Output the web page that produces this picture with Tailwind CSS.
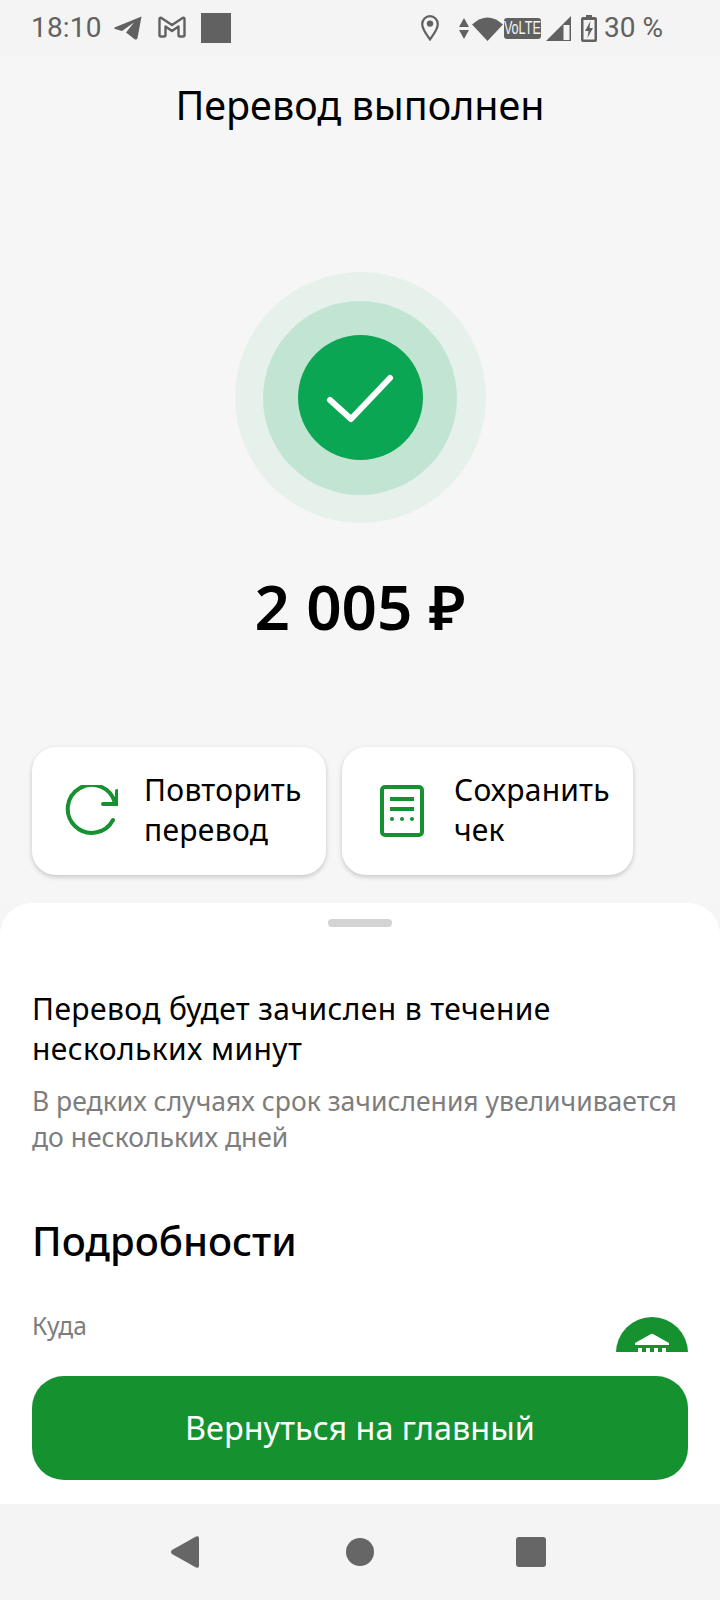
<!DOCTYPE html>
<html lang="ru">
<head>
    <meta charset="UTF-8">
    <meta name="viewport" content="width=device-width, initial-scale=1.0">
    <script src="https://cdn.jsdelivr.net/npm/@tailwindcss/browser@4"></script>
    <title>Перевод выполнен</title>
</head>
<body class="bg-[#f5f5f5]">
<div class="w-[720px] h-[1600px] flex flex-col overflow-hidden font-['Noto_Sans','Open_Sans',sans-serif] text-black">

    <!-- status bar -->
    <div class="h-[56px] shrink-0 flex items-center bg-[#f4f4f4] pl-[31px] text-[#616161] font-['Roboto',sans-serif] text-[28px]">
        <span class="w-[83px] tracking-[0.2px]">18:10</span>
        <svg class="w-[28px] h-[24px] mt-[-1px]" viewBox="0 0 28 24" fill="#616161"><path d="M27.5 0.5 L0.5 11.5 Q0 12.5 1 13 L8 15 L20 6.5 L12 16.5 L21 23.5 Q23 24 23.5 22 Z"/></svg>
        <svg class="w-[28px] h-[22px] ml-[16px] mt-[-3px]" viewBox="0 0 28 22" fill="none" stroke="#616161" stroke-width="2.4" stroke-linejoin="round"><path d="M1.5 3 Q1.5 1.5 3 1.8 L14 9 L25 1.8 Q26.5 1.5 26.5 3 V19 Q26.5 20.5 25 20.5 H22 Q20.5 20.5 20.5 19 V10.5 L14 15 L7.5 10.5 V19 Q7.5 20.5 6 20.5 H3 Q1.5 20.5 1.5 19 Z"/></svg>
        <div class="w-[30px] h-[30px] bg-[#616161] ml-[15px]"></div>

        <svg class="w-[18px] h-[26px] ml-[190px]" viewBox="0 0 18 26" fill="none" stroke="#616161" stroke-width="2.2"><path d="M9 24.5 C6 20 1.2 14.5 1.2 9 A7.8 7.8 0 0 1 16.8 9 C16.8 14.5 12 20 9 24.5 Z"/><circle cx="9" cy="8.6" r="3.2" fill="#616161" stroke="none"/></svg>
        <svg class="w-[10px] h-[21px] ml-[20px]" viewBox="0 0 10 21" fill="#616161"><path d="M5 0 L10 9 H0 Z M0 12 H10 L5 21 Z"/></svg>
        <svg class="w-[31px] h-[25px] ml-[3px]" viewBox="0 0 31 25" fill="#616161"><path d="M0 8.5 Q15.5 -5.500 31 8.500 L15.500 25 Z"/></svg>
        <div class="w-[37px] h-[21px] ml-[1px] rounded-[3px] bg-[#616161] text-[#f4f4f4] text-[18px] leading-[21px] flex justify-center font-['Liberation_Sans',sans-serif] overflow-hidden"><span class="inline-block scale-x-[0.7] origin-center">VoLTE</span></div>
        <svg class="w-[25px] h-[25px] ml-[5px]" viewBox="0 0 25 25"><path d="M0 25 L25 0 V25 Z" fill="#616161"/><rect x="17.500" y="9" width="6" height="15" fill="#f4f4f4"/></svg>
        <svg class="w-[16px] h-[27px] ml-[10px]" viewBox="0 0 16 27"><path d="M5 0 H11 V2 H14 Q16 2 16 4 V25 Q16 27 14 27 H2 Q0 27 0 25 V4 Q0 2 2 2 H5 Z" fill="#616161"/><rect x="2.500" y="5" width="11" height="19.500" fill="#f4f4f4"/><path d="M9.500 6 L4 16 H7.500 L6.500 23 L12 13 H8.500 Z" fill="#616161"/></svg>
        <span class="ml-[7px] whitespace-nowrap">30 %</span>
    </div>

    <!-- header -->
    <div class="h-[847px] shrink-0 bg-[#f6f6f6] flex flex-col items-center relative">
        <h1 class="text-[39.500px] leading-[48px] mt-[25px] font-normal">Перевод выполнен</h1>

        <div class="mt-[143px] w-[251px] h-[251px] rounded-full bg-[#e6f1ec] flex items-center justify-center">
            <div class="w-[194px] h-[194px] rounded-full bg-[#c2e5d3] flex items-center justify-center">
                <div class="w-[125px] h-[125px] rounded-full bg-[#0aa653] flex items-center justify-center">
                    <svg class="w-[125px] h-[125px]" viewBox="0 0 125 125" fill="none" stroke="#fff" stroke-width="6" stroke-linecap="round" stroke-linejoin="round"><path d="M32 65 L53 84 L92 43"/></svg>
                </div>
            </div>
        </div>

        <div class="mt-[45px] text-[62px] leading-[76px] font-semibold">2 005 ₽</div>

        <div class="w-full flex gap-[16px] pl-[32px] mt-[103px]">
            <div class="w-[294px] h-[128px] rounded-[24px] bg-white shadow-[0_2px_5px_rgba(0,0,0,0.2)] flex items-center">
                <svg class="w-[54px] h-[52px] ml-[32px] shrink-0" viewBox="0 0 54 52" fill="none" stroke="#169130" stroke-width="4" stroke-linecap="round"><path d="M49 35 A24 24 0 1 1 51 18"/><path d="M53 6 V19 H39"/></svg>
                <div class="ml-[26px] -mt-[2px] text-[30px] leading-[40px] tracking-[0.3px]">Повторить<br>перевод</div>
            </div>
            <div class="w-[291px] h-[128px] rounded-[24px] bg-white shadow-[0_2px_5px_rgba(0,0,0,0.2)] flex items-center">
                <svg class="w-[44px] h-[52px] ml-[38px] shrink-0" viewBox="0 0 44 52" fill="none" stroke="#169130" stroke-width="4"><rect x="2" y="2" width="40" height="48" rx="3"/><path d="M10 14 H34 M10 24 H34"/><g fill="#169130" stroke="none"><circle cx="12" cy="34" r="2"/><circle cx="22" cy="34" r="2"/><circle cx="32" cy="34" r="2"/></g></svg>
                <div class="ml-[30px] -mt-[2px] text-[30px] leading-[40px] tracking-[0.2px]">Сохранить<br>чек</div>
            </div>
        </div>
    </div>

    <!-- bottom sheet -->
    <div class="h-[601px] shrink-0 bg-white rounded-t-[32px] flex flex-col">
        <div class="h-[449px] shrink-0 overflow-hidden pl-[32px] pr-[32px] relative">
            <div class="w-[64px] h-[8px] rounded-full bg-[#d3d3d3] mx-auto mt-[16px]"></div>
            <p class="mt-[62px] text-[30px] leading-[40px] tracking-[0.4px]">Перевод будет зачислен в течение<br>нескольких минут</p>
            <p class="mt-[14px] text-[26.500px] leading-[36px] text-[#7d7d7d]">В редких случаях срок зачисления увеличивается<br>до нескольких дней</p>
            <h2 class="mt-[60px] text-[40px] leading-[52px] font-medium">Подробности</h2>
            <div class="mt-[44px] text-[24.500px] leading-[30px] text-[#7d7d7d]">Куда</div>
            <div class="absolute left-[616px] top-[414px] w-[72px] h-[72px] rounded-full bg-[#169130]">
                <svg class="w-[72px] h-[72px]" viewBox="0 0 72 72" fill="#fff"><path d="M19 26 L35 17 Q36 16.500 37 17 L53 26 V28 H19 Z"/><rect x="22" y="31" width="4" height="4"/><rect x="30" y="31" width="4" height="4"/><rect x="38" y="31" width="4" height="4"/><rect x="46" y="31" width="4" height="4"/></svg>
            </div>
        </div>
        <div class="px-[32px] pt-[24px]">
            <div class="h-[104px] rounded-[32px] bg-[#169130] flex items-center justify-center text-white text-[32.400px] pb-[1px]">Вернуться на главный</div>
        </div>
    </div>

    <!-- nav bar -->
    <div class="absolute left-0 top-[1504px] w-[720px] h-[96px] bg-[#f4f4f4] flex items-center justify-between pl-[171px] pr-[174px]">
        <svg class="w-[28px] h-[32px]" viewBox="0 0 28 32" fill="#666"><path d="M1 14 L25 0.500 Q28 -0.500 28 2 V30 Q28 32.500 25 31.500 L1 18 Q-1 16 1 14 Z"/></svg>
        <div class="w-[28px] h-[28px] rounded-full bg-[#666] relative left-[2px]"></div>
        <div class="w-[30px] h-[30px] rounded-[3px] bg-[#666]"></div>
    </div>
</div>
</body>
</html>
